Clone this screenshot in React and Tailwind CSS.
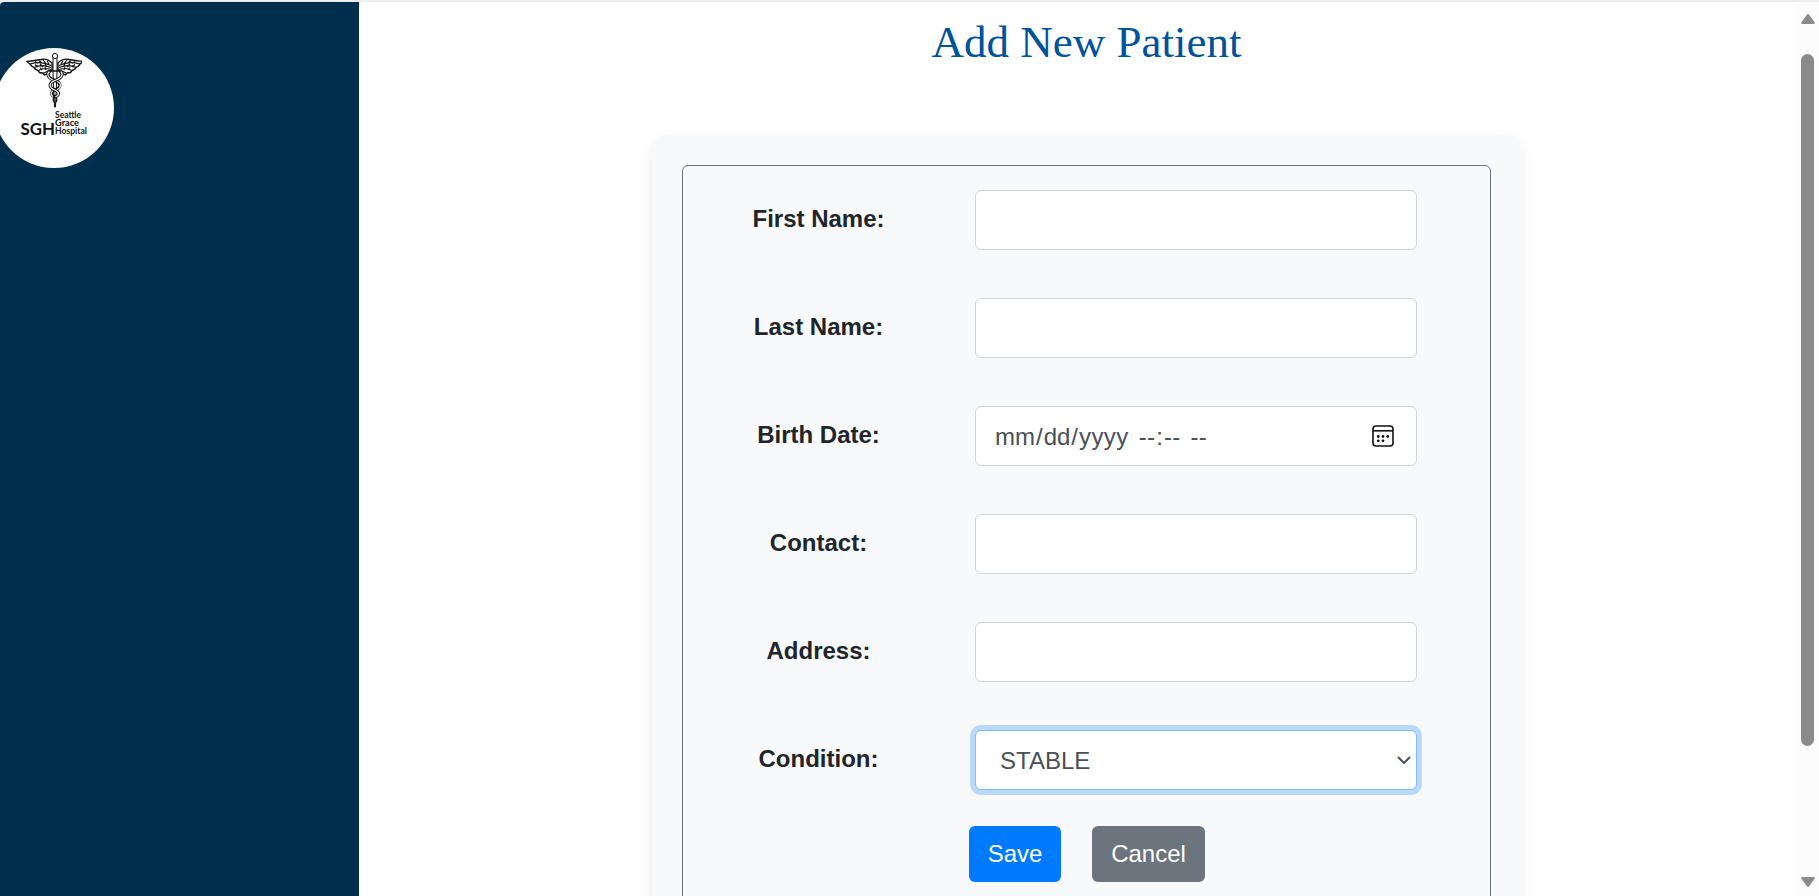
const labelCell = "flex w-[292px] justify-center pt-[11px] pr-[21px] text-2xl leading-9 font-bold text-[#212529]";
const field = "h-[60px] w-[442px] rounded-md border border-[#ced4da] bg-white text-2xl text-[#495057]";

function Wing() {
  return (
    <g>
      <path fill="#fff" strokeWidth="1.400" d="M26 10C23 7 19 5.500 15 6.500C10 7.500 6 8 1 8.500L4.500 11.500L5 12.500L8 14.500L9 16L12 17.500L13.500 19.500L16.500 20L18.500 22L21.500 21L26 17Z" />
      <path strokeWidth="1.150" d="M4 11C11 9 18 9 25 12.500M8 14.500C13 12 19 12 25 14.500M12.500 17.500C16 15 20 15 25 16.500M17 20.500L23 17.500M9 8.500L12 10.500M13 7.500L16 10M17 7L20 10.500M21 8L23 11M9 11.500L12 14M14 11L17 14M19 11L21 14M14 14.500L16 17M19 14L20 17" />
    </g>
  );
}

function Caduceus() {
  return (
    <svg className="h-[56px] w-[56px]" viewBox="0 0 56 56" fill="none" stroke="#111" strokeWidth="1">
      <Wing />
      <g transform="translate(58 0) scale(-1 1)"><Wing /></g>
      <path d="M27 4V20L28.500 54H29.500L31 20V4Z" fill="#fff" />
      <circle cx="29" cy="3" r="2.600" fill="#fff" />
      <g strokeWidth="3.200">
        <path d="M34 18C38 21 36 25 29 27.500C22 30 23 35 29 37C34 39 33 42.500 29 44" />
        <path d="M24 18C20 21 22 25 29 27.500C36 30 35 35 29 37C24 39 25 42.500 29 44" />
      </g>
      <path stroke="#fff" strokeWidth="1.300" d="M34 18C38 21 36 25 29 27.500C22 30 23 35 29 37C34 39 33 42.500 29 44" />
      <path stroke="#fff" strokeWidth="1.200" d="M24 18C20 21 22 25 27 27M31 28.500C36 30 35 35 31 36.500M27 38C24 39 25 42.500 27 43.500" />
      <path strokeWidth="1.300" d="M29 44C26 45.500 27 48.500 29 50M29 44C32 45.500 31 48.500 29 50V54" />
      <path strokeWidth="1.600" d="M23 18H35" />
    </svg>
  );
}

function Logo() {
  return (
    <div className="-ml-[6px] flex h-[120px] w-[120px] flex-col items-center rounded-full bg-white pt-[5px] text-black">
      <Caduceus />
      <svg className="h-[29px] w-[70px]" viewBox="0 0 70 29" fontFamily="Lato" fill="#111">
        <text x="1.500" y="25.500" fontSize="17.500" fontWeight="700" textLength="34.500" lengthAdjust="spacingAndGlyphs">SGH</text>
        <text x="36" y="8.500" fontSize="8.800" fontWeight="700" textLength="26" lengthAdjust="spacingAndGlyphs">Seattle</text>
        <text x="36" y="17" fontSize="8.800" fontWeight="700" textLength="24" lengthAdjust="spacingAndGlyphs">Grace</text>
        <text x="36" y="25" fontSize="8.800" fontWeight="700" textLength="32" lengthAdjust="spacingAndGlyphs">Hospital</text>
      </svg>
    </div>
  );
}

function Row({ label, children }) {
  return (
    <div className="flex h-[60px]">
      <div className={labelCell}>{label}</div>
      {children}
    </div>
  );
}

function DateField() {
  return (
    <div className={field + " flex items-center justify-between pr-[22px] pl-[18px]"}>
      <div className="flex pt-[2px] leading-9 whitespace-pre">
        <span className="px-px">mm</span>/<span className="px-px">dd</span>/<span className="px-px tracking-[0.4px]">yyyy</span>
        <span className="w-[8px]"> </span><span className="px-px tracking-[0.3px]">--</span>:<span className="px-px tracking-[0.3px]">--</span><span className="w-[8px]"> </span><span className="px-px tracking-[0.3px]">--</span>
      </div>
      <svg className="h-[22px] w-[22px]" viewBox="0 0 22 22" fill="none" stroke="#111" strokeWidth="1.600">
        <rect x="1" y="1" width="20" height="20" rx="3" />
        <path d="M1 5.800H21" />
        <g fill="#111" stroke="none">
          <circle cx="6.300" cy="11.500" r="1.400" /><circle cx="11" cy="11.500" r="1.400" /><circle cx="15.700" cy="11.500" r="1.400" />
          <circle cx="6.300" cy="15.800" r="1.400" /><circle cx="11" cy="15.800" r="1.400" />
        </g>
      </svg>
    </div>
  );
}

function Scrollbar() {
  return (
    <div className="flex w-[23px] flex-col items-center bg-[#fcfcfc] pt-[12px]">
      <svg className="h-[10px] w-[14px]" viewBox="0 0 14 10" fill="#8b8b8b"><path d="M5.800 0.700Q7 -0.600 8.200 0.700L13.700 8.500Q14 10 13 10H1Q0 10 0.300 8.500Z" /></svg>
      <div className="mt-[30px] h-[692px] w-[13px] rounded-full bg-[#8b8b8b]" />
      <svg className="mt-[131px] h-[10px] w-[14px]" viewBox="0 0 14 10" fill="#8b8b8b"><path d="M5.800 9.300Q7 10.600 8.200 9.300L13.700 1.500Q14 0 13 0H1Q0 0 0.300 1.500Z" /></svg>
    </div>
  );
}

export default function App() {
  return (
    <div className="flex h-[896px] flex-col overflow-hidden border-t-2 border-[#ededed] bg-white font-['Liberation_Sans',sans-serif]">
      <div className="flex min-h-0 flex-1">
        <aside className="w-[359px] shrink-0 overflow-hidden rounded-tl-[4px] bg-[#002f4d] pt-[46px]">
          <Logo />
        </aside>
        <main className="flex min-w-0 flex-1 flex-col items-center pl-[18px]">
          <h1 className="mt-[13px] h-[120px] shrink-0 font-['Liberation_Serif',serif] text-[45px] leading-[54px] text-[#00529b]">Add New Patient</h1>
          <section className="h-[850px] w-[869px] shrink-0 rounded-[15px] bg-[#f8f9fb] p-[30px] shadow-[0_6px_15px_rgba(0,0,0,0.08)]">
            <div className="flex h-[790px] flex-col gap-[48px] rounded-md border border-[#6c757d] pt-[24px]">
              <Row label="First Name:"><input className={field} /></Row>
              <Row label="Last Name:"><input className={field} /></Row>
              <Row label="Birth Date:"><DateField /></Row>
              <Row label="Contact:"><input className={field} /></Row>
              <Row label="Address:"><input className={field} /></Row>
              <Row label="Condition:">
                <div className="flex h-[60px] w-[442px] items-center justify-between rounded-md border border-[#80bdff] bg-white pr-[5px] pl-[24px] text-2xl leading-9 text-[#495057] shadow-[0_0_0_5px_#b9d9fc]">
                  <span className="pt-[2px]">STABLE</span>
                  <svg className="h-[8px] w-[14px]" viewBox="0 0 14 8" fill="none" stroke="#495057" strokeWidth="2"><path d="M1 1L7 7L13 1" /></svg>
                </div>
              </Row>
              <div className="-mt-[12px] flex gap-[31px] pl-[286px] text-2xl text-white">
                <button className="h-[56px] w-[92px] rounded-md bg-[#007bff]">Save</button>
                <button className="h-[56px] w-[113px] rounded-md bg-[#6c757d]">Cancel</button>
              </div>
            </div>
          </section>
        </main>
        <Scrollbar />
      </div>
    </div>
  );
}
